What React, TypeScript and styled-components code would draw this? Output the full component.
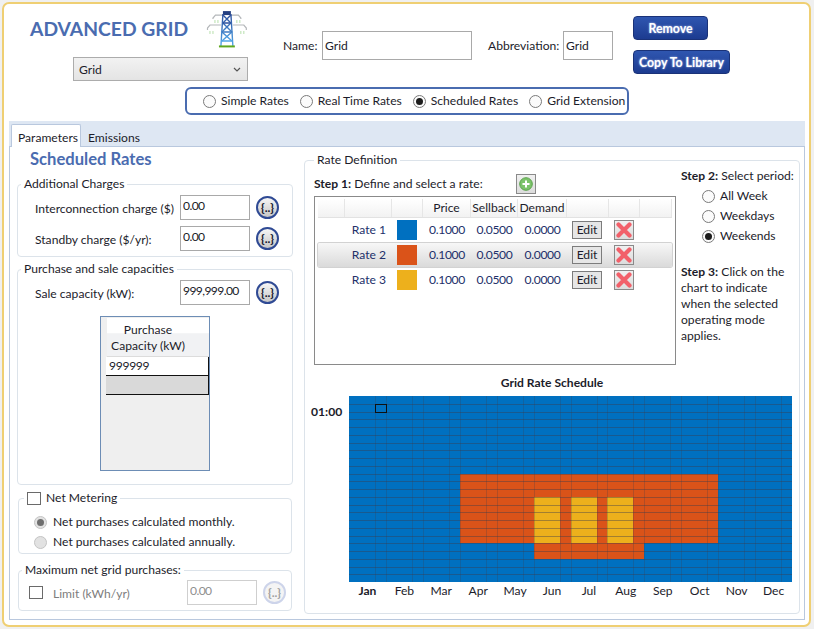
import React from "react";
import styled, { createGlobalStyle } from "styled-components";

const GlobalStyle = createGlobalStyle`
	html, body {
		margin: 0;
		background: #f0f0f0;
	}
	* {
		box-sizing: border-box;
	}
	body {
		font-family: "Lato", "Open Sans", sans-serif;
		font-size: 12.1px;
		line-height: 16px;
		color: #1c1c2a;
	}
`;

const Frame = styled.div`
	width: 809px;
	height: 625px;
	margin: 2px;
	background: #fff;
	border: 2px solid #efcf73;
	border-radius: 7px;
`;

const TopRow = styled.div`
	display: flex;
	align-items: flex-start;
	height: 83px;
`;

const TitleBlock = styled.div`
	margin-left: 26px;
	width: 218px;
`;

const TitleRow = styled.div`
	display: flex;
	height: 53px;
	padding-top: 5px;
`;

const Title = styled.h1`
	margin: 7px 0 0;
	width: 177px;
	font-size: 19.3px;
	line-height: 26px;
	font-weight: 700;
	color: #4a6cb0;
`;

const Select = styled.div`
	display: flex;
	align-items: center;
	justify-content: space-between;
	margin-left: 43px;
	width: 175px;
	height: 24px;
	padding: 1px 6px 0 5px;
	border: 1px solid #acacac;
	background: linear-gradient(#f2f2f2, #e4e4e4);
`;

const Fields = styled.div`
	display: flex;
	align-items: center;
	margin: 27px 0 0 35px;
`;

const FieldLabel = styled.label<{ $w: number; $ml?: number }>`
	width: ${(p) => p.$w}px;
	margin-left: ${(p) => p.$ml ?? 0}px;
`;

const TextBox = styled.input<{ $w: number; $h?: number; $top?: boolean; $off?: boolean }>`
	width: ${(p) => p.$w}px;
	height: ${(p) => p.$h ?? 25}px;
	padding: 0 1px ${(p) => (p.$top ? 5 : 0)}px 2px;
	border: 1px solid ${(p) => (p.$off ? "#cfcfcf" : "#a9a9a9")};
	outline: none;
	border-radius: 0;
	background: #fff;
	font: inherit;
	letter-spacing: ${(p) => (p.$top ? -0.6 : 0)}px;
	color: ${(p) => (p.$off ? "#8f8f8f" : "#1c1c2a")};
`;

const ActionColumn = styled.div`
	display: flex;
	flex-direction: column;
	align-items: flex-start;
	gap: 10px;
	margin: 12px 0 0 20px;
`;

const ActionButton = styled.button`
	height: 24px;
	padding: 0 5px;
	min-width: 75px;
	border: 1px solid #1a3278;
	border-radius: 4px;
	background: linear-gradient(#2f56b0, #1c3b90);
	color: #fff;
	font: 700 12.3px "Lato", sans-serif;
	text-shadow: 0 0 2px #c8d4f4;
`;

const RateModeBar = styled.div`
	display: flex;
	align-items: center;
	gap: 11px;
	margin-left: 181px;
	width: 444px;
	height: 28px;
	padding-left: 16px;
	border: 2px solid #4a6cb0;
	border-radius: 6px;
`;

const Option = styled.label<{ $gap?: number; $off?: boolean }>`
	display: flex;
	align-items: center;
	gap: ${(p) => p.$gap ?? 5}px;
	white-space: nowrap;
`;

const RadioDot = styled.span<{ $on?: boolean; $off?: boolean }>`
	display: flex;
	align-items: center;
	justify-content: center;
	width: 13px;
	height: 13px;
	border-radius: 50%;
	border: 1px solid ${(p) => (p.$off ? "#c4c4c4" : "#7a7a7a")};
	background: ${(p) => (p.$off ? "#e2e2e2" : "#fbfbfb")};
	&::after {
		content: "";
		display: ${(p) => (p.$on ? "block" : "none")};
		width: 7px;
		height: 7px;
		border-radius: 50%;
		background: ${(p) => (p.$off ? "#6e6e6e" : "#1c1c1c")};
	}
`;

const TabBand = styled.div`
	display: flex;
	align-items: flex-end;
	margin: 6px 0 0 5px;
	width: 796px;
	height: 26px;
	padding-left: 2px;
	background: #dee7f3;
	border-bottom: 1px solid #b9c8de;
`;

const Tab = styled.div<{ $active?: boolean }>`
	width: ${(p) => (p.$active ? "70px" : "auto")};
	height: ${(p) => (p.$active ? 23 : 22)}px;
	margin-bottom: ${(p) => (p.$active ? -1 : 0)}px;
	padding: 5px 0 0 6px;
	background: ${(p) => (p.$active ? "#fff" : "transparent")};
	border: 1px solid ${(p) => (p.$active ? "#b9c8de" : "transparent")};
	border-bottom: none;
	border-radius: 2px 2px 0 0;
`;

const Panel = styled.div`
	display: flex;
	gap: 11px;
	margin-left: 5px;
	width: 796px;
	height: 473px;
	padding: 1px 0 0 7px;
	border: 1px solid #b9c8de;
	border-top: none;
`;

const LeftColumn = styled.div`
	width: 276px;
`;

const Heading = styled.h2`
	margin: 1px 0 7px 13px;
	font-size: 16.6px;
	line-height: 20px;
	font-weight: 700;
	color: #4a6cb0;
`;

const Group = styled.fieldset<{ $h: number; $inset?: boolean; $mb?: number }>`
	min-width: 0;
	height: ${(p) => p.$h}px;
	margin: 0 ${(p) => (p.$inset ? 1 : 0)}px ${(p) => p.$mb ?? 0}px;
	padding: 0;
	border: 1px solid #dce3ea;
	border-radius: 4px;
`;

const GroupTitle = styled.legend<{ $ml?: number }>`
	display: flex;
	align-items: center;
	gap: 5px;
	margin-left: ${(p) => p.$ml ?? 3}px;
	padding: 0 3px;
	line-height: 16px;
`;

const ChargeList = styled.div`
	display: flex;
	flex-direction: column;
	gap: 6px;
	padding: 3px 0 0 17px;
`;

const ChargeRow = styled.div`
	display: flex;
	align-items: center;
`;

const ChargeLabel = styled.span<{ $w?: number; $off?: boolean }>`
	width: ${(p) => p.$w ?? 145}px;
	padding-top: 3px;
	white-space: nowrap;
	color: ${(p) => (p.$off ? "#7d7d7d" : "inherit")};
`;

const VarButton = styled.button<{ $off?: boolean }>`
	width: 23px;
	height: 23px;
	margin-left: 6px;
	padding: 0;
	border-radius: 50%;
	border: 2px solid ${(p) => (p.$off ? "#cdd4ea" : "#2f4a94")};
	background: ${(p) => (p.$off ? "#f4f4f4" : "linear-gradient(#f6f6f6, #c6c6c6)")};
	color: ${(p) => (p.$off ? "#a0a0a0" : "#14142a")};
	font: 700 12px "Lato", sans-serif;
`;

const CapacityTable = styled.div`
	width: 110px;
	height: 155px;
	margin: 11px 0 0 82px;
	padding-top: 1px;
	border: 1px solid #6d8db5;
	background: #efefef;
`;

const CapacityHeader = styled.div`
	width: 102px;
	height: 39px;
	margin-left: 6px;
	padding: 4px 20px 0 0;
	text-align: center;
	background: linear-gradient(#fff 40%, #f1f2f4 41%);
	border-bottom: 1px solid #dcdcdc;
`;

const CapacityRow = styled.div<{ $blank?: boolean }>`
	width: 103px;
	height: 19px;
	margin-left: 5px;
	padding-left: 3px;
	line-height: 18px;
	letter-spacing: -0.3px;
	background: ${(p) => (p.$blank ? "#d9d9d9" : "#fff")};
	border-right: 1px solid #111;
	border-bottom: 1px solid #111;
`;

const MeterList = styled.div`
	display: flex;
	flex-direction: column;
	padding: 6px 0 0 15px;
`;

const MeterRow = styled(Option)`
	height: 20px;
`;

const CheckBox = styled.span<{ $mr?: number }>`
	flex: none;
	width: 14px;
	height: 13px;
	margin-right: ${(p) => p.$mr ?? 0}px;
	border: 1px solid #6a6a6a;
	background: #fff;
`;

const LimitRow = styled.div`
	display: flex;
	align-items: center;
	padding: 2px 0 0 10px;
`;

const RightColumn = styled.div`
	padding-top: 4px;
`;

const DefinitionGroup = styled(Group)`
	width: 496px;
	padding: 0 0 0 6px;
`;

const DefinitionRow = styled.div`
	display: flex;
	gap: 5px;
	margin-left: 3px;
`;

const RateArea = styled.div`
	width: 362px;
	padding-top: 6px;
`;

const StepOneRow = styled.div`
	display: flex;
	align-items: center;
	height: 20px;
	margin-bottom: 2px;
`;

const StepOneText = styled.span`
	width: 202px;
`;

const Strong = styled.b`
	font-weight: 700;
`;

const SquareButton = styled.button<{ $mr?: number }>`
	display: flex;
	align-items: center;
	justify-content: center;
	width: 20px;
	height: 20px;
	margin-right: ${(p) => p.$mr ?? 0}px;
	padding: 0;
	border: 1px solid #8a8a8a;
	background: linear-gradient(#f0f0f0, #dcdcdc);
`;

const RateBox = styled.div`
	height: 169px;
	padding: 2px 3px;
	border: 1px solid #8a8a8a;
`;

const rateColumns = "27px 47px 31px 48px 47px 49px 42px 31px 32px";

const RateHead = styled.div`
	display: grid;
	grid-template-columns: ${rateColumns};
	height: 19px;
	border-bottom: 1px solid #e2e2e2;
`;

const HeadCell = styled.div`
	text-align: center;
	white-space: nowrap;
	line-height: 18px;
	background: linear-gradient(#fff, #f2f2f2);
	border-right: 1px solid #e6e6e6;
`;

const RateRows = styled.div`
	display: flex;
	flex-direction: column;
	gap: 1px;
`;

const RateRow = styled.div<{ $selected?: boolean }>`
	display: grid;
	grid-template-columns: ${rateColumns};
	align-items: center;
	justify-items: center;
	height: 24px;
	color: #22306a;
	border-radius: 2px;
	background: ${(p) => (p.$selected ? "linear-gradient(#f7f7f7, #dadada)" : "transparent")};
	box-shadow: ${(p) => (p.$selected ? "0 0 0 1px #d2d2d2" : "none")};
`;

const RateName = styled.span`
	grid-column: 2;
	justify-self: end;
	padding-right: 6px;
`;

const Swatch = styled.span<{ $color: string }>`
	width: 20px;
	height: 20px;
	margin-right: 1px;
	background: ${(p) => p.$color};
`;

const Amount = styled.span`
	letter-spacing: -0.3px;
`;

const EditButton = styled.button`
	width: 30px;
	height: 18px;
	margin-right: 2px;
	padding: 0;
	border: 1px solid #7c7c7c;
	background: #e6e6e6;
	color: #1c1c2a;
	font: inherit;
	line-height: 14px;
`;

const StepPanel = styled.div`
	width: 118px;
	white-space: nowrap;
`;

const PeriodList = styled.div`
	display: flex;
	flex-direction: column;
	margin: 2px 0 18px 21px;
`;

const PeriodRow = styled(Option)`
	height: 20px;
`;

const ChartTitle = styled.div`
	width: 482px;
	margin: 10px 0 5px;
	font-weight: 700;
	text-align: center;
`;

const ChartRow = styled.div`
	display: flex;
`;

const HourLabel = styled.div`
	width: 38px;
	padding-top: 8px;
	font-weight: 700;
`;

const MonthRow = styled.div`
	display: grid;
	grid-template-columns: repeat(12, 1fr);
	width: 443px;
	margin-left: 38px;
	padding-top: 1px;
	text-align: center;
`;

const Month = styled.span<{ $active?: boolean }>`
	font-weight: ${(p) => (p.$active ? 700 : 400)};
`;

const BLUE = "#0070c0";
const ORANGE = "#da5319";
const YELLOW = "#edb01c";
const MONTHS = ["Jan", "Feb", "Mar", "Apr", "May", "Jun", "Jul", "Aug", "Sep", "Oct", "Nov", "Dec"];
const CHART_W = 443;
const CHART_H = 186;
const MONTH_W = CHART_W / 12;
const ROW_H = CHART_H / 24;
const WEEKDAY_W = 26;

const cellColor = (row: number, month: number, weekend: boolean) => {
	if (row >= 13 && row < 19 && month >= 5 && month <= 7 && !weekend) return YELLOW;
	if (row >= 10 && row < 19 && month >= 3 && month <= 9) return ORANGE;
	if (row >= 19 && row < 21 && month >= 5 && month <= 7) return ORANGE;
	return BLUE;
};

// lines sit on whole pixels, otherwise some rows come out fainter than others
const snap = (v: number) => Math.round(v) + 0.5;

const ScheduleChart = () => {
	const cells = [];
	for (let r = 0; r < 24; r++) {
		for (let m = 0; m < 12; m++) {
			const x = m * MONTH_W;
			const y = r * ROW_H;
			cells.push(
				<rect key={`${r}-${m}-a`} x={x} y={y} width={WEEKDAY_W} height={ROW_H + 1} fill={cellColor(r, m, false)} />,
				<rect key={`${r}-${m}-b`} x={x + WEEKDAY_W} y={y} width={MONTH_W - WEEKDAY_W} height={ROW_H + 1} fill={cellColor(r, m, true)} />
			);
		}
	}
	const rows = [];
	for (let r = 1; r < 24; r++) {
		rows.push(<line key={`h${r}`} x1={0} x2={CHART_W} y1={snap(r * ROW_H)} y2={snap(r * ROW_H)} />);
	}
	const columns = [];
	for (let m = 0; m < 12; m++) {
		columns.push(<line key={`w${m}`} x1={snap(m * MONTH_W + WEEKDAY_W)} x2={snap(m * MONTH_W + WEEKDAY_W)} y1={0} y2={CHART_H} />);
		if (m > 0) columns.push(<line key={`m${m}`} x1={snap(m * MONTH_W)} x2={snap(m * MONTH_W)} y1={0} y2={CHART_H} />);
	}
	return (
		<svg width={CHART_W} height={CHART_H} viewBox={`0 0 ${CHART_W} ${CHART_H}`} shapeRendering="crispEdges">
			{cells}
			<g stroke="#3c3c4c" strokeOpacity={0.42} strokeWidth={1}>
				{rows}
			</g>
			<g stroke="#3c3c4c" strokeOpacity={0.25} strokeWidth={1}>
				{columns}
			</g>
			<rect x={26.5} y={8.5} width={10.5} height={7.5} fill="none" stroke="#101010" />
		</svg>
	);
};

const TowerIcon = () => (
	<svg width={42} height={40} viewBox="0 0 42 40">
		<defs>
			<linearGradient id="towerBlue" x1="0" y1="0" x2="0" y2="1">
				<stop offset="0" stopColor="#2c4f9c" />
				<stop offset="1" stopColor="#52a6e8" />
			</linearGradient>
		</defs>
		<g fill="none" stroke="#b4b7ba" strokeWidth={1.2}>
			<path d="M17 6H9.500L7 9v1M25 6h7.500L35 9v1" />
			<path d="M15 16H4L1.500 19v2M27 16h11l2.500 3v2" />
		</g>
		<g stroke="#b5dfaa" strokeWidth={1}>
			<path d="M9 11v3M12 11v3M31 11v3M34 11v3M4 22v3M7 22v3M35 22v3M38 22v3" />
		</g>
		<path d="M17 2h8v4h-8z" fill="#243f80" />
		<g fill="none" stroke="url(#towerBlue)" strokeWidth={1.4}>
			<path d="M17 5l-2 32M25 5l2 32" />
			<path d="M17 6l8 8-9 9 10 9M25 6l-8 8 9 9-10 9" />
			<path d="M17 14h8M16 23h10M15.500 32h11" />
		</g>
		<path d="M13 37.500h16" stroke="#5fa81e" strokeWidth={2} />
	</svg>
);

const AddIcon = () => (
	<svg width={14} height={14} viewBox="0 0 14 14">
		<circle cx={7} cy={7} r={6.3} fill="#7cc36a" stroke="#5ba24c" />
		<path d="M7 3.500v7M3.500 7h7" stroke="#fff" strokeWidth={2} />
	</svg>
);

const DeleteIcon = () => (
	<svg width={16} height={16} viewBox="0 0 16 16">
		<path d="M2.500 2.500l11 11M13.500 2.500l-11 11" stroke="#f2606a" strokeWidth={4.2} strokeLinecap="round" />
	</svg>
);

const Chevron = () => (
	<svg width={8} height={6} viewBox="0 0 8 6">
		<path d="M1 1l3 3 3-3" fill="none" stroke="#555" strokeWidth={1.2} />
	</svg>
);

const rates = [
	{ name: "Rate 1", color: BLUE },
	{ name: "Rate 2", color: ORANGE, selected: true },
	{ name: "Rate 3", color: YELLOW },
];

const App = () => {
	return (
		<Frame>
			<GlobalStyle />
			<TopRow>
				<TitleBlock>
					<TitleRow>
						<Title>ADVANCED GRID</Title>
						<TowerIcon />
					</TitleRow>
					<Select>
						Grid
						<Chevron />
					</Select>
				</TitleBlock>
				<Fields>
					<FieldLabel $w={39}>Name:</FieldLabel>
					<TextBox $w={150} $h={29} defaultValue="Grid" readOnly />
					<FieldLabel $w={75} $ml={16}>Abbreviation:</FieldLabel>
					<TextBox $w={50} $h={29} defaultValue="Grid" readOnly />
				</Fields>
				<ActionColumn>
					<ActionButton>Remove</ActionButton>
					<ActionButton>Copy To Library</ActionButton>
				</ActionColumn>
			</TopRow>
			<RateModeBar>
				<Option><RadioDot />Simple Rates</Option>
				<Option><RadioDot />Real Time Rates</Option>
				<Option><RadioDot $on />Scheduled Rates</Option>
				<Option><RadioDot />Grid Extension</Option>
			</RateModeBar>
			<TabBand>
				<Tab $active>Parameters</Tab>
				<Tab>Emissions</Tab>
			</TabBand>
			<Panel>
				<LeftColumn>
					<Heading>Scheduled Rates</Heading>
					<Group $h={81} $mb={4}>
						<GroupTitle>Additional Charges</GroupTitle>
						<ChargeList>
							<ChargeRow>
								<ChargeLabel>Interconnection charge ($)</ChargeLabel>
								<TextBox $w={70} $top defaultValue="0.00" readOnly />
								<VarButton>{"{..}"}</VarButton>
							</ChargeRow>
							<ChargeRow>
								<ChargeLabel>Standby charge ($/yr):</ChargeLabel>
								<TextBox $w={70} $top defaultValue="0.00" readOnly />
								<VarButton>{"{..}"}</VarButton>
							</ChargeRow>
						</ChargeList>
					</Group>
					<Group $h={224} $mb={5}>
						<GroupTitle>Purchase and sale capacities</GroupTitle>
						<ChargeList>
							<ChargeRow>
								<ChargeLabel>Sale capacity (kW):</ChargeLabel>
								<TextBox $w={70} $top defaultValue="999,999.00" readOnly />
								<VarButton>{"{..}"}</VarButton>
							</ChargeRow>
						</ChargeList>
						<CapacityTable>
							<CapacityHeader>Purchase Capacity (kW)</CapacityHeader>
							<CapacityRow>999999</CapacityRow>
							<CapacityRow $blank />
						</CapacityTable>
					</Group>
					<Group $h={64} $inset $mb={8}>
						<GroupTitle $ml={5}><CheckBox />Net Metering</GroupTitle>
						<MeterList>
							<MeterRow $gap={6}><RadioDot $on $off />Net purchases calculated monthly.</MeterRow>
							<MeterRow $gap={6}><RadioDot $off />Net purchases calculated annually.</MeterRow>
						</MeterList>
					</Group>
					<Group $h={49} $inset>
						<GroupTitle>Maximum net grid purchases:</GroupTitle>
						<LimitRow>
							<CheckBox $mr={10} />
							<ChargeLabel $w={134} $off>Limit (kWh/yr)</ChargeLabel>
							<TextBox $w={70} $top $off defaultValue="0.00" readOnly />
							<VarButton $off>{"{..}"}</VarButton>
						</LimitRow>
					</Group>
				</LeftColumn>
				<RightColumn>
					<DefinitionGroup $h={462}>
						<GroupTitle>Rate Definition</GroupTitle>
						<DefinitionRow>
							<RateArea>
								<StepOneRow>
									<StepOneText><Strong>Step 1:</Strong> Define and select a rate:</StepOneText>
									<SquareButton><AddIcon /></SquareButton>
								</StepOneRow>
								<RateBox>
									<RateHead>
										<HeadCell />
										<HeadCell />
										<HeadCell />
										<HeadCell>Price</HeadCell>
										<HeadCell>Sellback</HeadCell>
										<HeadCell>Demand</HeadCell>
										<HeadCell />
										<HeadCell />
										<HeadCell />
									</RateHead>
									<RateRows>
										{rates.map((rate) => (
											<RateRow key={rate.name} $selected={rate.selected}>
												<RateName>{rate.name}</RateName>
												<Swatch $color={rate.color} />
												<Amount>0.1000</Amount>
												<Amount>0.0500</Amount>
												<Amount>0.0000</Amount>
												<EditButton>Edit</EditButton>
												<SquareButton $mr={1}><DeleteIcon /></SquareButton>
											</RateRow>
										))}
									</RateRows>
								</RateBox>
							</RateArea>
							<StepPanel>
								<div><Strong>Step 2:</Strong> Select period:</div>
								<PeriodList>
									<PeriodRow><RadioDot />All Week</PeriodRow>
									<PeriodRow><RadioDot />Weekdays</PeriodRow>
									<PeriodRow><RadioDot $on />Weekends</PeriodRow>
								</PeriodList>
								<div>
									<Strong>Step 3:</Strong> Click on the<br />
									chart to indicate<br />
									when the selected<br />
									operating mode<br />
									applies.
								</div>
							</StepPanel>
						</DefinitionRow>
						<ChartTitle>Grid Rate Schedule</ChartTitle>
						<ChartRow>
							<HourLabel>01:00</HourLabel>
							<ScheduleChart />
						</ChartRow>
						<MonthRow>
							{MONTHS.map((m, i) => (
								<Month key={m} $active={i === 0}>{m}</Month>
							))}
						</MonthRow>
					</DefinitionGroup>
				</RightColumn>
			</Panel>
		</Frame>
	);
};

export default App;
